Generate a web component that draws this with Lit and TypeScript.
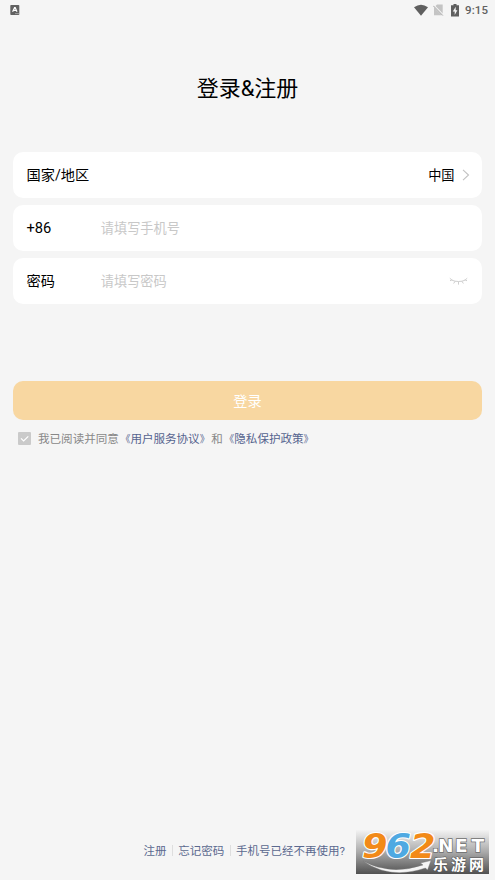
import { LitElement, html, css } from "lit";
import { customElement } from "lit/decorators.js";

@customElement("status-bar")
class StatusBar extends LitElement {
  static styles = css`
    :host { display: flex; align-items: center; height: 20px; padding: 0 6px 0 10px; box-sizing: border-box; }
    svg { display: block; }
    .right { margin-left: auto; display: flex; align-items: center; }
    .wifi { margin-right: 5px; }
    .sim { margin-right: 7px; }
    .battery { margin-right: 6px; }
    .time { font: 500 11.5px/20px Roboto, sans-serif; color: #616161; letter-spacing: 0.1px; width: 24px; white-space: nowrap; }
  `;
  render() {
    return html`
      <svg width="10" height="10" viewBox="0 0 10 10">
        <rect x="0.3" y="0" width="9" height="10" rx="0.8" fill="#626262" />
        <path d="M2.6 6.8 4.6 2.5H5.2L7 6.8M3.5 5.3H6.2" fill="none" stroke="#fff" stroke-width="1.2" />
        <path d="M5 8.6H9" stroke="#bbb" stroke-width="0.7" />
      </svg>
      <div class="right">
        <svg class="wifi" width="14" height="12" viewBox="0 0 14 12">
          <path d="M0 3.2Q7-1.8 14 3.2L7 11.7Z" fill="#5f5f5f" />
        </svg>
        <svg class="sim" width="11" height="12" viewBox="0 0 11 12">
          <path d="M4 .5H9.7V11.2H1V3.5Z" fill="#c4c4c4" />
          <path d="M.3 1.1 10.4 11.5" stroke="#f5f5f5" stroke-width="2" />
          <path d="M.3 1.8 9.8 11.5" stroke="#a3a3a3" stroke-width="1" />
        </svg>
        <svg class="battery" width="8" height="13" viewBox="0 0 8 13">
          <path d="M2.5 0H5.5V1.2H8V12.5H0V1.2H2.5Z" fill="#5f5f5f" />
          <path d="M4.7 2.8 1.8 7.4H3.7V11L6.4 6.2H4.7Z" fill="#f5f5f5" />
        </svg>
        <div class="time">9:15</div>
      </div>
    `;
  }
}

@customElement("site-badge")
class SiteBadge extends LitElement {
  static styles = css`
    :host { display: block; width: 133px; height: 44px; }
    svg { display: block; overflow: visible; }
    .digits { font: italic 700 33.5px "DejaVu Sans", sans-serif; stroke: #fff; stroke-width: 2.2px; paint-order: stroke; stroke-linejoin: round; }
    .orange { fill: #f28a18; }
    .blue { fill: #4fa9e2; }
    .net { font: 700 18.5px "DejaVu Sans", sans-serif; fill: #fff; stroke: #6c6c6c; stroke-width: 1.4px; paint-order: stroke; }
    .name { font: 700 15px "Noto Sans CJK SC", sans-serif; fill: #fff; stroke: #555; stroke-width: 1px; paint-order: stroke; }
  `;
  render() {
    return html`
      <svg width="133" height="44" viewBox="0 0 133 44">
        <defs>
          <linearGradient id="bg" x1="0" y1="0" x2="0" y2="1">
            <stop offset="0" stop-color="#f3f3f3" />
            <stop offset="0.5" stop-color="#aaa" />
            <stop offset="1" stop-color="#505050" />
          </linearGradient>
        </defs>
        <rect width="133" height="44" fill="url(#bg)" />
        <path d="M7 31Q34 46 67 35L64.5 33 75 30.5 71.5 40 69.5 38Q34 50 7 31Z" fill="#f5f5f5" stroke="#777" stroke-width="0.4" />
        <text class="digits orange" x="6" y="28" textLength="25.5" lengthAdjust="spacingAndGlyphs">9</text>
        <text class="digits blue" x="29.5" y="28" textLength="25.5" lengthAdjust="spacingAndGlyphs">6</text>
        <text class="digits orange" x="54" y="28" textLength="25.5" lengthAdjust="spacingAndGlyphs">2</text>
        <text class="net" y="22"><tspan x="76">.</tspan><tspan x="82">N</tspan><tspan x="99">E</tspan><tspan x="115.5">T</tspan></text>
        <text class="name" y="39.5" x="77 95 113">乐游网</text>
      </svg>
    `;
  }
}

@customElement("app-root")
class AppRoot extends LitElement {
  static styles = css`
    :host {
      display: flex; flex-direction: column; position: relative; box-sizing: border-box;
      width: 100%; height: 880px; overflow: hidden; background: #f5f5f5; color: #111;
      font-family: Roboto, "Noto Sans CJK SC", sans-serif;
    }
    h1 { margin: 53px 0 0; font-size: 22px; font-weight: 400; line-height: 32px; text-align: center; color: #000; }
    .form { margin: 47px 13px 0; display: flex; flex-direction: column; gap: 6.8px; }
    .row { display: flex; align-items: center; height: 46px; border-radius: 10px; background: #fff; padding: 0 13.5px; font-size: 14.2px; color: #000; }
    .label, .value { padding-bottom: 1.5px; }
    .row .code { font-size: 14.7px; padding-bottom: 0; }
    .label { width: 74.3px; white-space: nowrap; }
    .value { margin-left: auto; font-size: 13.2px; }
    .hint { font-size: 13.2px; color: #c8c8c8; }
    svg { display: block; flex: none; }
    .chevron { margin: 0 -1px 0 7px; }
    .eye { margin-left: auto; }
    .submit {
      margin: 77px 13px 0; height: 39.4px; border-radius: 10px; background: #f8d7a1; color: #fff;
      display: flex; align-items: center; justify-content: center; font-size: 14.2px;
    }
    .submit span { padding-bottom: 1px; }
    .agree { display: flex; align-items: center; margin: 9.2px 0 0 18px; height: 18px; font-size: 11.55px; color: #888; white-space: nowrap; }
    .check { margin-right: 7px; }
    .link { color: #56648f; display: flex; align-items: center; }
    .open, .close { width: 11.55px; font-size: 10px; display: flex; }
    .open { justify-content: flex-end; }
    .footer { margin: auto 0 21px 143.4px; height: 18px; display: flex; align-items: center; font-size: 11.5px; color: #5b698f; white-space: nowrap; }
    .bar { width: 1px; height: 11px; margin: 0 5.4px; background: #dedede; }
    site-badge { position: absolute; left: 356px; top: 830px; }
  `;
  link(name: string) {
    return html`<span class="link"><span class="open">《</span>${name}<span class="close">》</span></span>`;
  }
  render() {
    return html`
      <status-bar></status-bar>
      <h1>登录&amp;注册</h1>
      <div class="form">
        <div class="row">
          <span class="label">国家/地区</span>
          <span class="value">中国</span>
          <svg class="chevron" width="8" height="12" viewBox="0 0 8 12">
            <path d="M1 .8 6.5 6 1 11.2" fill="none" stroke="#c2c2c2" stroke-width="1.1" />
          </svg>
        </div>
        <div class="row">
          <span class="label code">+86</span><span class="hint">请填写手机号</span>
        </div>
        <div class="row">
          <span class="label">密码</span><span class="hint">请填写密码</span>
          <svg class="eye" width="20" height="8" viewBox="0 0 20 8">
            <path d="M.8 1.2Q2.5 3.6 6 4.2Q9.5 4.8 13 4.2Q16.5 3.6 18.2 1.2M3.2 2.6 1 3.8M6.2 4.2 4.6 6.5M9.5 4.5V7.6M12.8 4.2 14.4 6.5M15.8 2.6 18 3.8" fill="none" stroke="#cfcfcf" stroke-width="1" />
          </svg>
        </div>
      </div>
      <div class="submit"><span>登录</span></div>
      <div class="agree">
        <svg class="check" width="13" height="13" viewBox="0 0 13 13">
          <rect width="13" height="13" rx="1" fill="#cacaca" />
          <path d="M3 6.4 5.6 9 10.3 4.3" fill="none" stroke="#fff" stroke-width="1.2" />
        </svg>
        <span>我已阅读并同意</span>${this.link("用户服务协议")}<span>和</span>${this.link("隐私保护政策")}
      </div>
      <div class="footer">
        <span>注册</span><i class="bar"></i><span>忘记密码</span><i class="bar"></i><span>手机号已经不再使用?</span>
      </div>
      <site-badge></site-badge>
    `;
  }
}
